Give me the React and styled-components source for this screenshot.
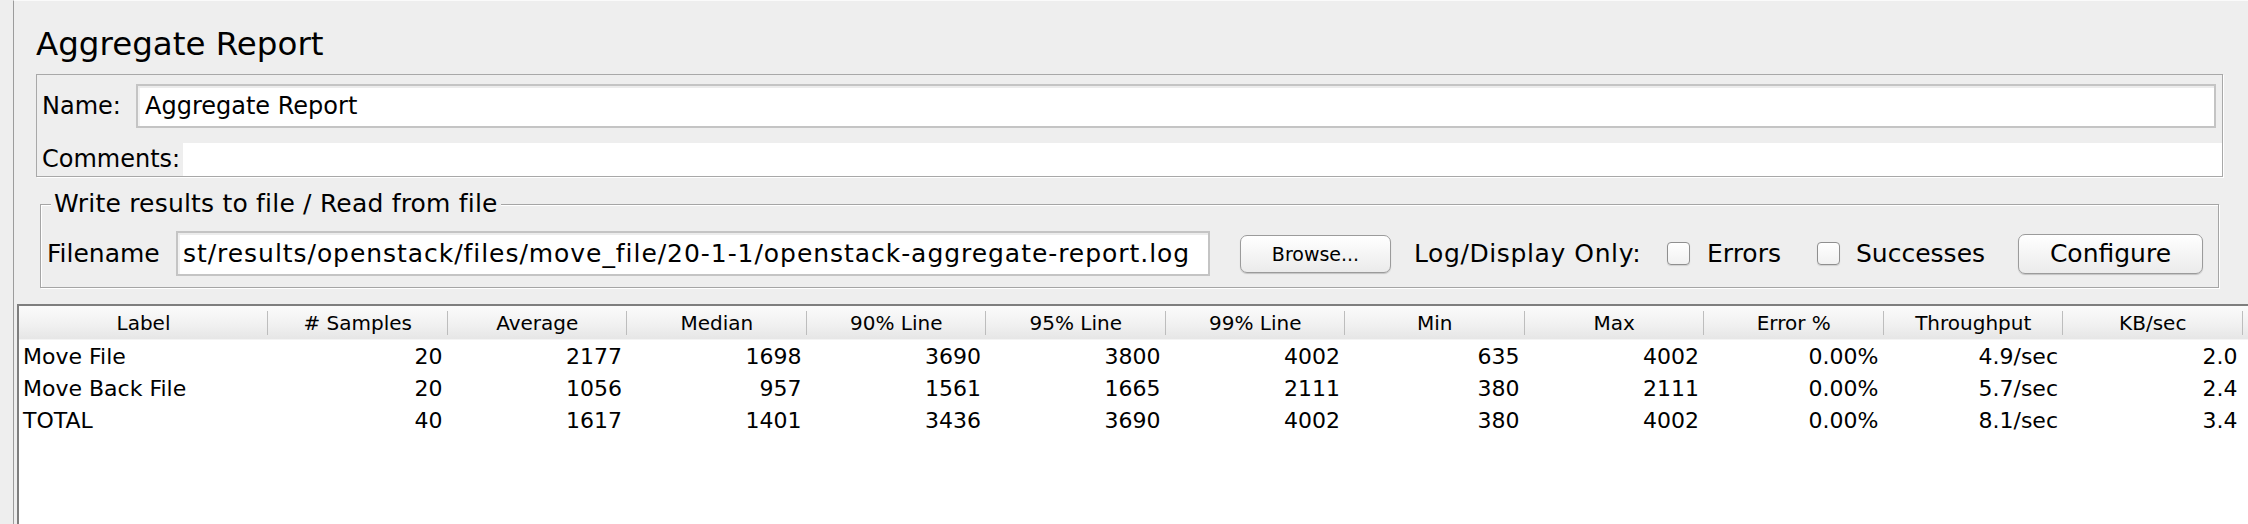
import React from "react";
import styled, { createGlobalStyle } from "styled-components";

const GlobalStyle = createGlobalStyle`
  html, body {
    margin: 0;
    padding: 0;
    background: #eeeeee;
  }
  body {
    font-family: "DejaVu Sans", "Liberation Sans", sans-serif;
    color: #000;
  }
`;

const Window = styled.div`
  width: 2248px;
  height: 524px;
  overflow: hidden;
  display: flex;
  padding-left: 13px;
  box-sizing: border-box;
  background: #eeeeee;
`;

const Pane = styled.div`
  flex: 1;
  min-width: 0;
  display: flex;
  flex-direction: column;
  border-left: 1px solid #9c9c9c;
  border-top: 1px solid #fafafa;
`;

const Settings = styled.div`
  padding: 0 25px 0 22px;
`;

const Title = styled.div`
  margin-top: 23px;
  font-size: 32.5px;
  line-height: 40px;
`;

const NameBox = styled.div`
  margin-top: 10px;
  border: 1px solid #a8a8a8;
  box-shadow: 1px 1px 0 #ffffff;
`;

const NameRow = styled.div`
  display: flex;
  align-items: center;
  padding: 9px 6px 0 5px;
`;

const FieldLabel = styled.span`
  flex: none;
  width: ${(p) => p.$width || "auto"};
  margin-right: ${(p) => p.$gap || "0px"};
  font-size: ${(p) => p.$size || "24px"};
  line-height: ${(p) => p.$lh || "28px"};
  white-space: nowrap;
`;

const TextField = styled.div`
  flex: ${(p) => (p.$width ? "none" : "1")};
  width: ${(p) => p.$width || "auto"};
  min-width: 0;
  height: ${(p) => p.$height};
  box-sizing: border-box;
  display: flex;
  align-items: center;
  overflow: hidden;
  padding: ${(p) => p.$pad || "0 5px 0 7px"};
  background: #ffffff;
  border: 2px solid #c4c4c4;
  box-shadow: inset 0 2px 0 #ececec, inset 2px 0 0 #f2f2f2;
  font-size: ${(p) => p.$size || "24px"};
  letter-spacing: ${(p) => p.$spacing || "normal"};
  white-space: nowrap;
`;

const CommentsRow = styled.div`
  display: flex;
  align-items: stretch;
  margin-top: 15px;
  height: 33px;
  padding-left: 5px;
`;

const CommentsArea = styled.div`
  flex: 1;
  background: #ffffff;
`;

const FileBox = styled.fieldset`
  margin: 13px 4px 0 4px;
  padding: 13px 16px 11px 6px;
  border: 1px solid #a5a5a5;
  box-shadow: inset 1px 1px 0 #ffffff, 1px 1px 0 #ffffff;
  min-width: 0;
`;

const Legend = styled.legend`
  margin-left: 4px;
  padding: 0 3px;
  font-size: 25px;
  letter-spacing: 0.2px;
  line-height: 28px;
  background: #eeeeee;
`;

const FileRow = styled.div`
  display: flex;
  align-items: center;
  height: 45px;
`;

const Button = styled.button`
  flex: none;
  height: ${(p) => p.$height || "40px"};
  width: ${(p) => p.$width};
  margin-left: ${(p) => p.$gap || "0px"};
  padding: 0;
  border: 1px solid #9b9b9b;
  border-radius: 7px;
  background: linear-gradient(#ffffff, #f3f3f3 60%, #ebebeb);
  box-shadow: 0 1px 1px rgba(0, 0, 0, 0.18);
  font-family: inherit;
  font-size: ${(p) => p.$size || "25px"};
  color: #000;
`;

const Plain = styled.span`
  flex: none;
  width: ${(p) => p.$width};
  margin-left: ${(p) => p.$gap || "0px"};
  font-size: 25px;
  letter-spacing: ${(p) => p.$spacing || "normal"};
  line-height: 28px;
  white-space: nowrap;
`;

const CheckBox = styled.span`
  flex: none;
  width: 21px;
  height: 21px;
  margin-left: ${(p) => p.$gap};
  border: 1px solid #8f8f8f;
  border-radius: 4px;
  background: linear-gradient(#ffffff, #f1f1f1);
  box-shadow: 0 1px 1px rgba(0, 0, 0, 0.12);
`;

const TableArea = styled.div`
  flex: 1;
  margin: 16px 0 0 3px;
  background: #ffffff;
  border-top: 2px solid #7e7e7e;
  border-left: 2px solid #7e7e7e;
`;

const cols = "249px repeat(11, 179.5px) 1fr";

const HeaderRow = styled.div`
  display: grid;
  grid-template-columns: ${cols};
  height: 33px;
  background: linear-gradient(#fbfbfb, #f1f1f1 55%, #e6e6e6);
  border-bottom: 1px solid #f4f4f4;
`;

const HeaderCell = styled.div`
  position: relative;
  display: flex;
  align-items: center;
  justify-content: center;
  font-size: 20px;
  &::after {
    content: "";
    position: absolute;
    right: 0;
    top: 5px;
    bottom: 4px;
    width: 1px;
    background: ${(p) => (p.$last ? "transparent" : "#bdbdbd")};
  }
`;

const DataRow = styled.div`
  display: grid;
  grid-template-columns: ${cols};
  height: 32px;
  align-items: center;
  font-size: 22px;
`;

const Cell = styled.div`
  text-align: ${(p) => (p.$label ? "left" : "right")};
  padding: ${(p) => (p.$label ? "0 0 0 4px" : "0 5px 0 0")};
  white-space: nowrap;
`;

const headers = [
  "Label",
  "# Samples",
  "Average",
  "Median",
  "90% Line",
  "95% Line",
  "99% Line",
  "Min",
  "Max",
  "Error %",
  "Throughput",
  "KB/sec",
];

const rows = [
  ["Move File", "20", "2177", "1698", "3690", "3800", "4002", "635", "4002", "0.00%", "4.9/sec", "2.0"],
  ["Move Back File", "20", "1056", "957", "1561", "1665", "2111", "380", "2111", "0.00%", "5.7/sec", "2.4"],
  ["TOTAL", "40", "1617", "1401", "3436", "3690", "4002", "380", "4002", "0.00%", "8.1/sec", "3.4"],
];

export default function App() {
  return (
    <>
      <GlobalStyle />
      <Window>
        <Pane>
          <Settings>
            <Title>Aggregate Report</Title>
            <NameBox>
              <NameRow>
                <FieldLabel $width="94px">Name:</FieldLabel>
                <TextField $height="44px">Aggregate Report</TextField>
              </NameRow>
              <CommentsRow>
                <FieldLabel $gap="3px" $lh="33px">Comments:</FieldLabel>
                <CommentsArea />
              </CommentsRow>
            </NameBox>
            <FileBox>
              <Legend>Write results to file / Read from file</Legend>
              <FileRow>
                <FieldLabel $width="129px" $size="25px">Filename</FieldLabel>
                <TextField
                  $height="45px"
                  $width="1034px"
                  $size="25px"
                  $spacing="0.95px"
                  $pad="0 2px 0 5px"
                >
                  st/results/openstack/files/move_file/20-1-1/openstack-aggregate-report.log
                </TextField>
                <Button $gap="30px" $width="151px" $height="38px" $size="19px">
                  Browse...
                </Button>
                <Plain $gap="23px" $width="227px" $spacing="0.6px">
                  Log/Display Only:
                </Plain>
                <CheckBox $gap="26px" />
                <Plain $gap="17px" $width="72px">
                  Errors
                </Plain>
                <CheckBox $gap="38px" />
                <Plain $gap="16px" $width="126px">
                  Successes
                </Plain>
                <Button $gap="36px" $width="185px">
                  Configure
                </Button>
              </FileRow>
            </FileBox>
          </Settings>
          <TableArea>
            <HeaderRow>
              {headers.map((h) => (
                <HeaderCell key={h}>{h}</HeaderCell>
              ))}
              <HeaderCell $last />
            </HeaderRow>
            {rows.map((r) => (
              <DataRow key={r[0]}>
                {r.map((v, i) => (
                  <Cell key={i} $label={i === 0}>
                    {v}
                  </Cell>
                ))}
              </DataRow>
            ))}
          </TableArea>
        </Pane>
      </Window>
    </>
  );
}
